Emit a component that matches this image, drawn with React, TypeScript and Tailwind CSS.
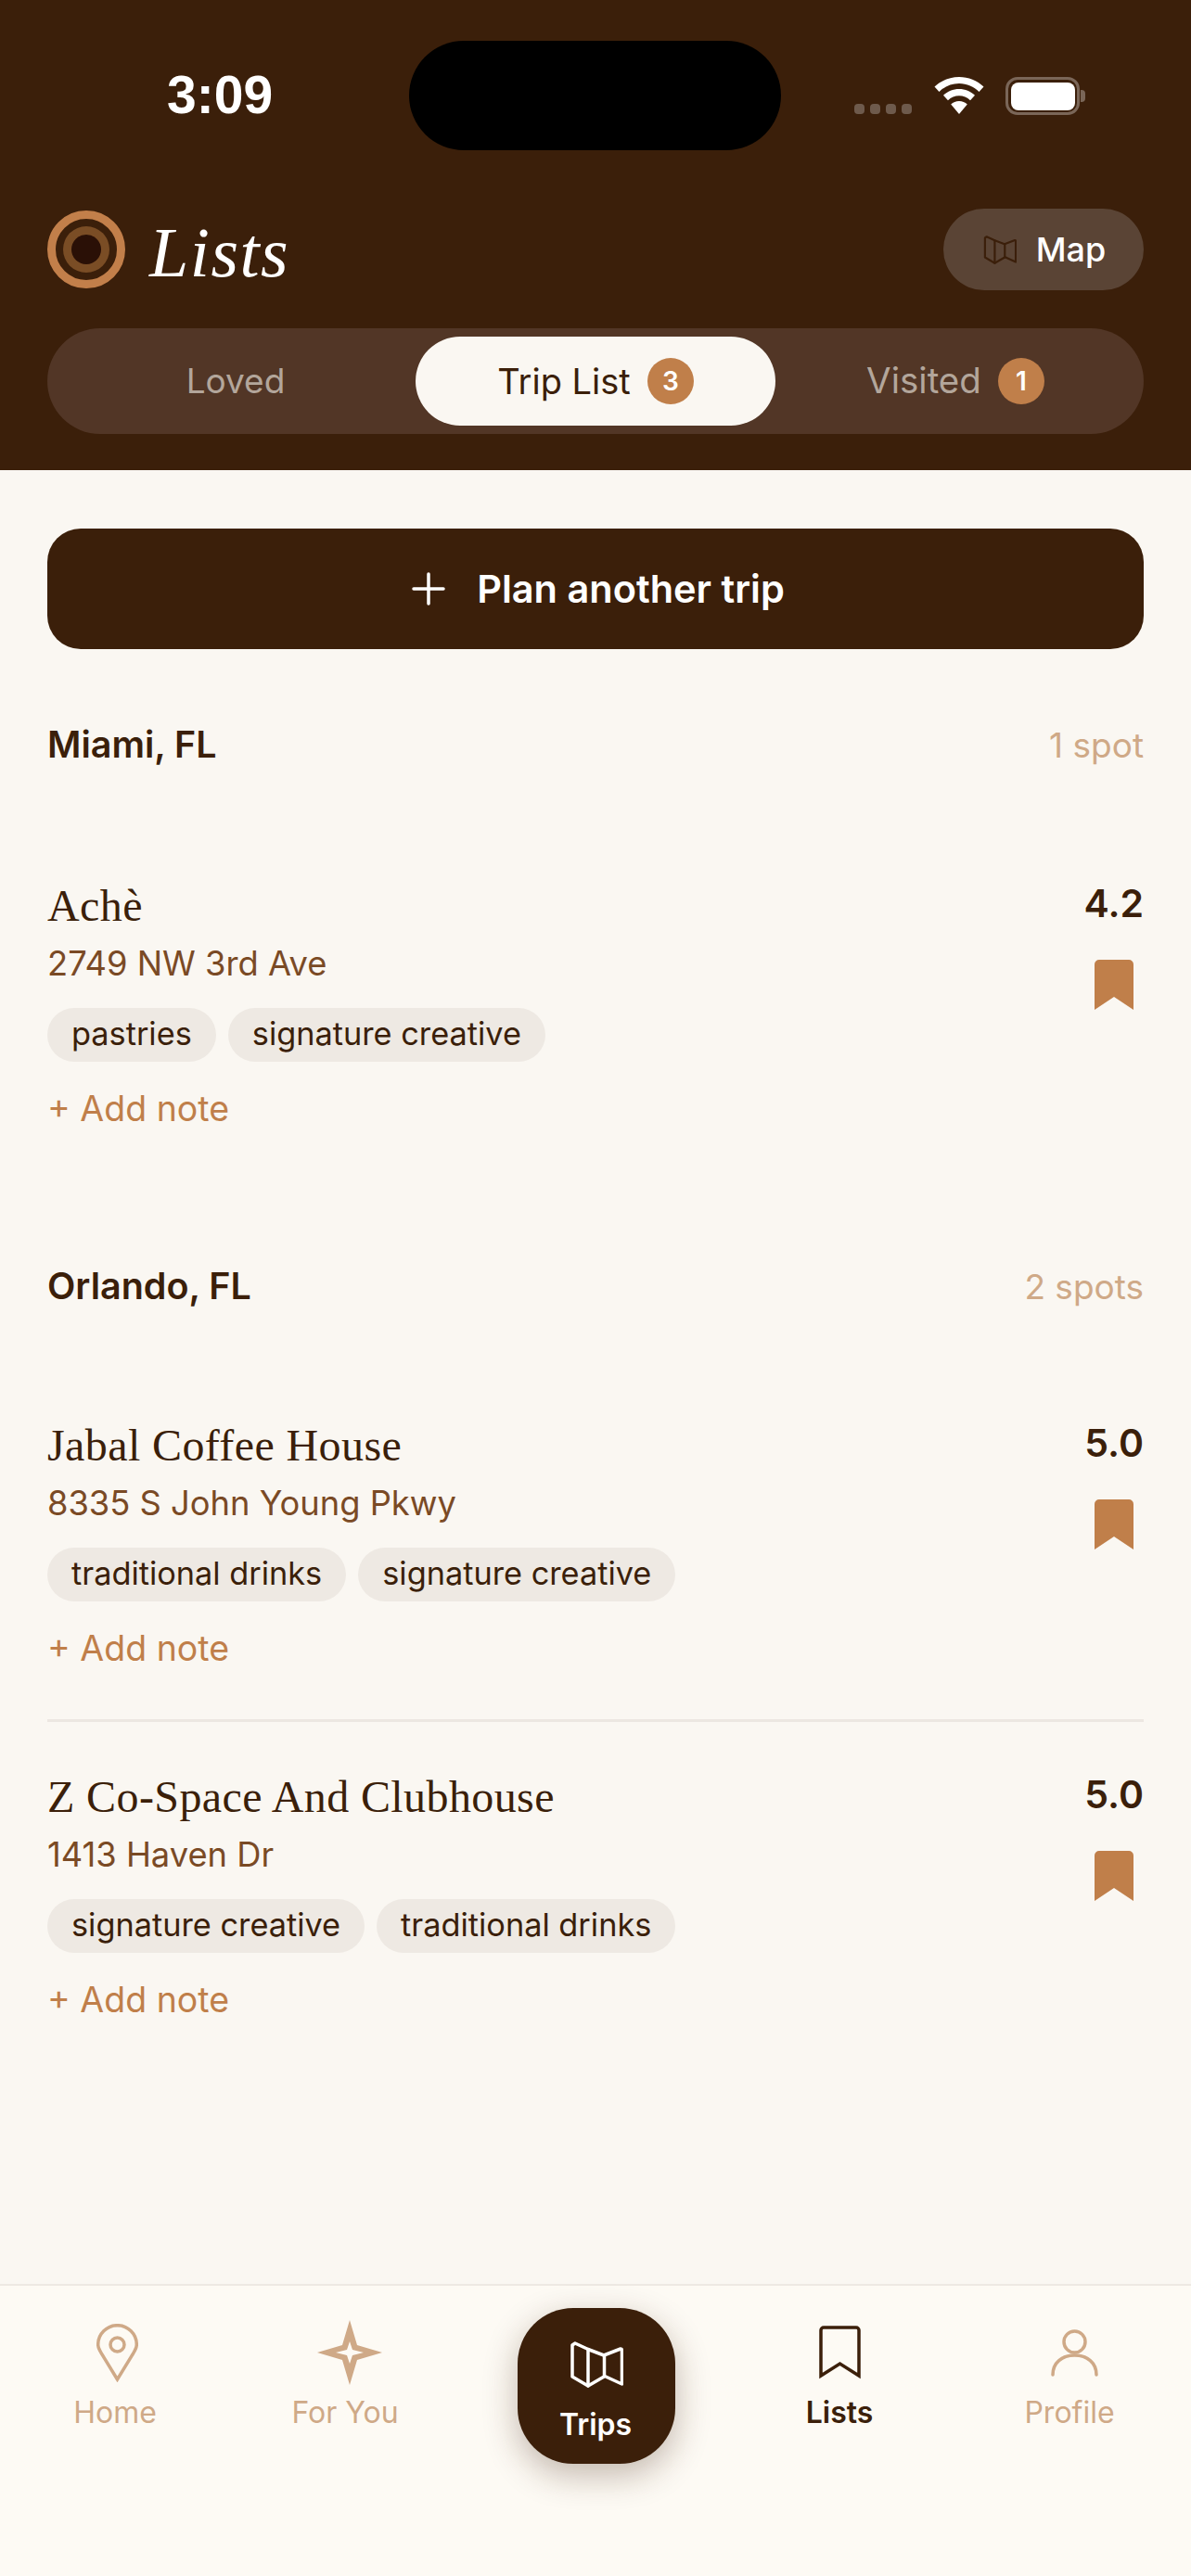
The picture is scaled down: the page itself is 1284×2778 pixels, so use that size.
import React from "react";

function MapGlyph({ className }: { className: string }) {
  return (
    <svg viewBox="0 0 58 50" fill="none" stroke="currentColor" strokeWidth="3.500" strokeLinejoin="round" strokeLinecap="round" className={className}>
      <path d="M6 2l14 6.500 17 6.500 18-7a1.500 1.500 0 0 1 1.500 1.500V46l-18.500-8.500L20 48 3 38V4z" />
      <path d="M20 8.500V48M37.500 15V37.500" />
    </svg>
  );
}

function FilledBookmark() {
  return (
    <svg viewBox="0 0 42 54" className="w-[42px] h-[54px] text-[#c07f4a]" fill="currentColor">
      <path d="M5 0h32a5 5 0 0 1 5 5v49L21 40 0 54V5a5 5 0 0 1 5-5z" />
    </svg>
  );
}

function Tag({ children }: { children: React.ReactNode }) {
  return <span className="h-[58px] px-[26px] rounded-full bg-[#eee9e3] text-[#3b1f0a] text-[34.300px] leading-[56px]">{children}</span>;
}

function Place({ name, address, rating, tags }: { name: string; address: string; rating: string; tags: string[] }) {
  return (
    <div className="flex justify-between items-start">
      <div>
        <div className="h-[60px] text-[48px] leading-[60px] tracking-[0.4px] text-[#3b1f0a] [font-family:'Liberation_Serif',serif]">{name}</div>
        <div className="mt-[8px] h-[48px] text-[36.300px] leading-[48px] text-[#7a4a25]">{address}</div>
        <div className="mt-[24px] flex gap-[13px]">
          {tags.map((t) => (
            <Tag key={t}>{t}</Tag>
          ))}
        </div>
        <div className="mt-[26px] h-[48px] text-[37.500px] leading-[50px] text-[#c07f4a]">+ Add note</div>
      </div>
      <div className="flex flex-col items-end">
        <div className="mt-[2px] text-[41px] leading-[50px] font-semibold text-[#3b1f0a]">{rating}</div>
        <div className="mt-[36px] mr-[11px]">
          <FilledBookmark />
        </div>
      </div>
    </div>
  );
}

function CityHead({ city, count }: { city: string; count: string }) {
  return (
    <div className="flex justify-between items-center h-[50px]">
      <span className="text-[39.500px] font-semibold text-[#3b1f0a]">{city}</span>
      <span className="text-[37px] text-[#cfa987]">{count}</span>
    </div>
  );
}

function NavItem({ label, icon, active = false }: { label: string; icon: React.ReactNode; active?: boolean }) {
  return (
    <div className="w-[248px] flex flex-col items-center">
      <div className="h-[72px] flex items-center justify-center">{icon}</div>
      <div className={active ? "mt-[9px] text-[32px] leading-[40px] font-semibold text-[#3b1f0a]" : "mt-[9px] text-[32px] leading-[40px] text-[#cfa987]"}>{label}</div>
    </div>
  );
}

export default function App() {
  return (
    <div className="w-[1284px] h-[2778px] flex flex-col bg-[#faf7f2] overflow-hidden [font-family:Inter,sans-serif]">
      <header className="h-[507px] bg-[#3b1f0a] px-[51px] flex flex-col">
        <div className="h-[225px] relative flex items-start">
          <div className="absolute left-[129px] top-[70px] text-[57px] leading-[64px] font-semibold text-white [font-family:'Liberation_Sans',sans-serif]">3:09</div>
          <div className="absolute left-[390px] top-[44px] w-[401px] h-[118px] rounded-[59px] bg-black" />
          <div className="absolute left-[870px] top-[112px] flex gap-[6px]">
            {[0, 1, 2, 3].map((i) => (
              <span key={i} className="w-[11px] h-[11px] rounded-[4px] bg-[#6e5a4c]" />
            ))}
          </div>
          <svg viewBox="0 0 54 40" className="absolute left-[956px] top-[83px] w-[54px] h-[40px]" fill="white">
            <path d="M27 0c10 0 19.500 4 26.500 10.500l-5 5.500C43 10.500 35.500 7 27 7S11 10.500 5.500 16l-5-5.500C7.500 4 17 0 27 0z" />
            <path d="M27 13c6.500 0 12.500 2.500 17 6.800l-5 5.400C35.800 22.200 31.500 20.300 27 20.300s-8.800 1.900-12 4.900l-5-5.400C14.500 15.500 20.500 13 27 13z" />
            <path d="M27 26c3.400 0 6.500 1.300 8.800 3.500L27 40l-8.800-10.500C20.500 27.300 23.600 26 27 26z" />
          </svg>
          <div className="absolute left-[1033px] top-[83px] w-[80px] h-[41px] rounded-[13px] border-[3.500px] border-[#7a6658] p-[2.500px]">
            <div className="w-full h-full rounded-[8px] bg-white" />
          </div>
          <div className="absolute left-[1114px] top-[97px] w-[5px] h-[13px] rounded-r-[4px] bg-[#7a6658]" />
        </div>
        <div className="h-[88px] flex justify-between items-center">
          <div className="flex items-center gap-[26px]">
            <div className="w-[84px] h-[84px] rounded-full border-[9px] border-[#c27f4a] flex items-center justify-center">
              <div className="w-[50px] h-[50px] rounded-full bg-[#7a4d25] flex items-center justify-center">
                <div className="w-[32px] h-[32px] rounded-full bg-[#2a1006]" />
              </div>
            </div>
            <div className="mt-[6px] text-[76px] leading-[88px] tracking-[1.500px] italic text-white [font-family:'Liberation_Serif',serif]">Lists</div>
          </div>
          <div className="w-[216px] h-[88px] pl-[2px] rounded-full bg-[#5a4435] flex items-center justify-center gap-[21px] text-[36px] font-medium text-white">
            <MapGlyph className="w-[36px] h-[31px] text-[#3b1f0a]" />
            <span>Map</span>
          </div>
        </div>
        <div className="mt-[41px] h-[114px] rounded-full bg-[#523626] p-[9px] grid grid-cols-3">
          <div className="flex items-center justify-center text-[37px] text-[#b3a69b]">Loved</div>
          <div className="flex items-center justify-center gap-[18px] rounded-full bg-[#faf7f2] text-[38px] text-[#3b1f0a]">
            <span>Trip List</span>
            <span className="w-[50px] h-[50px] rounded-full bg-[#c07f4a] text-[28px] font-semibold text-white flex items-center justify-center">3</span>
          </div>
          <div className="flex items-center justify-center gap-[18px] text-[38.500px] text-[#b3a69b]">
            <span>Visited</span>
            <span className="w-[50px] h-[50px] rounded-full bg-[#c07f4a] text-[28px] font-semibold text-white flex items-center justify-center">1</span>
          </div>
        </div>
      </header>

      <main className="flex-1 px-[51px] pt-[63px]">
        <div className="h-[130px] pl-[6px] rounded-[36px] bg-[#3b1f0a] flex items-center justify-center gap-[34px] text-white">
          <svg viewBox="0 0 36 36" className="w-[36px] h-[36px]" stroke="currentColor" strokeWidth="3.500" strokeLinecap="round">
            <path d="M18 2v32M2 18h32" />
          </svg>
          <span className="text-[41.500px] font-semibold">Plan another trip</span>
        </div>
        <div className="mt-[79px]">
          <CityHead city="Miami, FL" count="1 spot" />
        </div>
        <div className="mt-[118px]">
          <Place name="Achè" address="2749 NW 3rd Ave" rating="4.2" tags={["pastries", "signature creative"]} />
        </div>
        <div className="mt-[144px]">
          <CityHead city="Orlando, FL" count="2 spots" />
        </div>
        <div className="mt-[116px]">
          <Place name="Jabal Coffee House" address="8335 S John Young Pkwy" rating="5.0" tags={["traditional drinks", "signature creative"]} />
        </div>
        <div className="mt-[53px] h-[3px] bg-[#ece7e1]" />
        <div className="mt-[51px]">
          <Place name="Z Co-Space And Clubhouse" address="1413 Haven Dr" rating="5.0" tags={["signature creative", "traditional drinks"]} />
        </div>
      </main>

      <nav className="h-[315px] border-t-[2px] border-[#eee9e3] bg-[#fdfaf4] pt-[36px] flex items-start">
        <NavItem
          label="Home"
          icon={
            <svg viewBox="0 0 45 63" className="w-[45px] h-[63px] translate-x-[2px] text-[#cfa987]" fill="none" stroke="currentColor" strokeWidth="3.500">
              <path d="M22.500 60L6 33C3 28 1.700 26 1.700 22.500a20.800 20.800 0 0 1 41.600 0C43.300 26 42 28 39 33z" />
              <circle cx="22.500" cy="22.500" r="7.500" />
            </svg>
          }
        />
        <NavItem
          label="For You"
          icon={
            <svg viewBox="0 0 70 70" className="w-[70px] h-[70px] translate-x-[5px] text-[#cfa987]" fill="currentColor" fillRule="evenodd">
              <path d="M35 0l8 27 27 8-27 8-8 27-8-27-27-8 27-8zM35 23l-3 9-12 3 12 3 3 9 3-9 12-3-12-3z" />
            </svg>
          }
        />
        <div className="w-[285px]">
          <div className="ml-[62px] -mt-[12px] w-[170px] h-[168px] pt-[36px] rounded-[60px] bg-[#3b1f0a] shadow-[0_12px_36px_rgba(59,31,10,0.3)] flex flex-col items-center text-white">
            <MapGlyph className="w-[58px] h-[50px]" />
            <span className="mt-[20px] pr-[2px] text-[32px] leading-[40px] font-semibold">Trips</span>
          </div>
        </div>
        <NavItem
          label="Lists"
          active
          icon={
            <svg viewBox="0 0 45 58" className="w-[45px] h-[58px] text-[#3b1f0a]" fill="none" stroke="currentColor" strokeWidth="3.500">
              <path d="M2 5a3 3 0 0 1 3-3h35a3 3 0 0 1 3 3v49L22.500 41 2 54z" />
            </svg>
          }
        />
        <NavItem
          label="Profile"
          icon={
            <svg viewBox="0 0 51 51" className="w-[51px] h-[51px] translate-x-[5px] text-[#cfa987]" fill="none" stroke="currentColor" strokeWidth="3.500" strokeLinecap="round">
              <circle cx="25.500" cy="13.500" r="11.500" />
              <path d="M2 49C2 36 12 28 25.500 28S49 36 49 49" />
            </svg>
          }
        />
      </nav>
    </div>
  );
}
